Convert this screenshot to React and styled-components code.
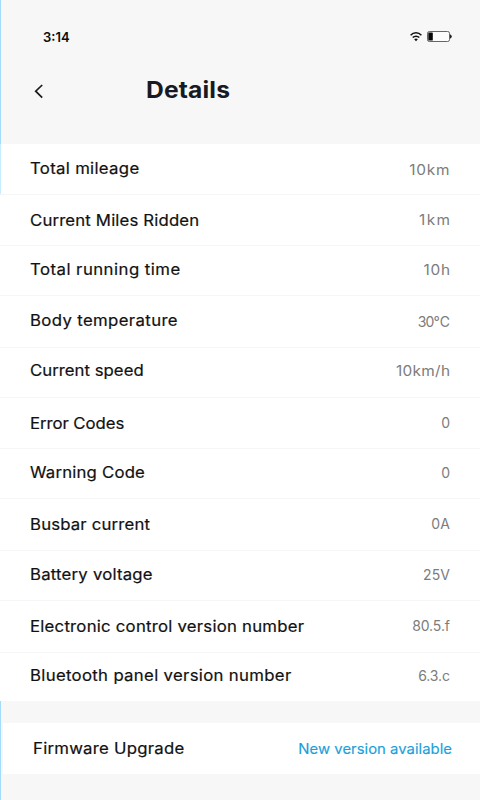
import React from "react";
import styled, { createGlobalStyle } from "styled-components";

const GlobalStyle = createGlobalStyle`
  * { box-sizing: border-box; }
  body { margin: 0; background: #f7f7f7; }
`;

const Screen = styled.main`
  display: flex;
  flex-direction: column;
  width: 480px;
  height: 800px;
  overflow: hidden;
  background: #f7f7f7;
  font-family: Inter, "Noto Sans CJK SC", sans-serif;
`;

const Header = styled.header`
  flex: none;
  height: 144px;
  border-left: 1px solid #a3dcf8;
`;

const StatusBar = styled.div`
  display: flex;
  align-items: center;
  justify-content: space-between;
  height: 73px;
  padding: 0 28px 0 42px;
`;

const Clock = styled.time`
  font-size: 13px;
  font-weight: 600;
  line-height: 16px;
  color: #0c0c0c;
`;

const StatusIcons = styled.div`
  display: flex;
  align-items: center;
  gap: 5px;
`;

const NavBar = styled.div`
  display: flex;
  align-items: center;
  height: 34px;
  padding-left: 32px;
`;

const BackButton = styled.button`
  display: flex;
  width: 12px;
  padding: 2px 0 0;
  border: 0;
  background: none;
`;

const Title = styled.h1`
  margin: 0 0 0 101px;
  font-size: 23px;
  font-weight: 700;
  line-height: 28px;
  letter-spacing: 0.15px;
  color: #171a24;
  transform: scaleX(1.07);
  transform-origin: left;
`;

const List = styled.section`
  flex: none;
  background: #fff;
`;

const Row = styled.div`
  display: flex;
  align-items: flex-start;
  justify-content: space-between;
  height: ${(p) => p.$height}px;
  padding: 0 30px;
  border-bottom: ${(p) => (p.$last ? "0" : "1px solid #f6f6f6")};
  box-shadow: ${(p) => (p.$edge ? "inset 1px 0 #c5eeff" : "none")};
`;

const Label = styled.span`
  padding-top: ${(p) => p.$top}px;
  font-size: 15.5px;
  line-height: 20px;
  letter-spacing: ${(p) => p.$track}px;
  white-space: nowrap;
  color: #111;
  -webkit-text-stroke: 0.2px #111;
  transform: scaleX(1.08);
  transform-origin: left;
`;

const Value = styled.span`
  padding-top: ${(p) => p.$top}px;
  margin-right: ${(p) => -p.$track}px;
  font-size: 14px;
  line-height: 20px;
  letter-spacing: ${(p) => p.$track}px;
  white-space: nowrap;
  color: #7c7c7c;
  transform: scaleX(${(p) => p.$stretch ?? 1});
  transform-origin: right;
`;

const Footer = styled.footer`
  flex: 1;
  padding: 22px 0 0 2px;
  border-left: 1px solid #a3dcf8;
`;

const UpgradeRow = styled.div`
  display: flex;
  align-items: flex-start;
  justify-content: space-between;
  height: 51px;
  padding: 0 28px 0 29.5px;
  background: #fff;
`;

const UpgradeLink = styled(Value)`
  color: #1a9fdb;
  -webkit-text-stroke: 0.15px #1a9fdb;
`;

// label, label spacing, label top, value, value spacing, value top, row height, value stretch
const rows = [
  ["Total mileage", 0.29, 15, "10km", 0.7, 16, 51, 1.1],
  ["Current Miles Ridden", 0.15, 16, "1km", 1.3, 15, 51, 1.1],
  ["Total running time", 0.44, 14, "10h", 0.75, 14, 50, 1.1],
  ["Body temperature", 0.34, 15, "30℃", -0.8, 16, 52, 1],
  ["Current speed", 0.02, 13, "10km/h", 0.25, 13, 50, 1.1],
  ["Error Codes", -0.05, 16, "0", 0, 15, 51, 1],
  ["Warning Code", 0.18, 14, "0", 0, 14, 50, 1],
  ["Busbar current", 0.16, 16, "0A", 0.2, 15, 52, 1],
  ["Battery voltage", 0.2, 14, "25V", 0.1, 14, 50, 1],
  ["Electronic control version number", 0.22, 16, "80.5.f", -0.1, 15, 52, 1],
  ["Bluetooth panel version number", 0.3, 13, "6.3.c", -0.1, 13, 48, 1],
];

function WifiIcon() {
  return (
    <svg width="12" height="10" viewBox="0 0 12 10" fill="none" stroke="#111" strokeWidth="1.5">
      <path d="M0.6 3.2 C3.6 0 8.4 0 11.4 3.2" />
      <path d="M2.7 5.6 C4.5 3.7 7.5 3.7 9.3 5.6" />
      <path d="M4.2 7.3 Q6 5.8 7.8 7.3 L6 9.2Z" fill="#111" stroke="none" />
    </svg>
  );
}

function BatteryIcon() {
  return (
    <svg width="25" height="11" viewBox="0 0 25 11">
      <rect x="0.5" y="0.5" width="22" height="10" rx="1.8" fill="#fcfcfc" stroke="#666" />
      <rect x="1.3" y="1.4" width="4.5" height="8.2" rx="0.6" fill="#080808" />
      <path d="M23 3.3 Q24.8 4 24.8 5.5 Q24.8 7 23 7.7Z" fill="#222" />
    </svg>
  );
}

function BackIcon() {
  return (
    <svg width="12" height="16" viewBox="0 0 12 16" fill="none" stroke="#1b1b1b" strokeWidth="1.7">
      <path d="M9.2 2 L2.7 8.2 L9.2 14.6" />
    </svg>
  );
}

export default function App() {
  return (
    <Screen>
      <GlobalStyle />
      <Header>
        <StatusBar>
          <Clock>3:14</Clock>
          <StatusIcons>
            <WifiIcon />
            <BatteryIcon />
          </StatusIcons>
        </StatusBar>
        <NavBar>
          <BackButton aria-label="Back">
            <BackIcon />
          </BackButton>
          <Title>Details</Title>
        </NavBar>
      </Header>
      <List>
        {rows.map(([label, track, top, value, valueTrack, valueTop, height, stretch], i) => (
          <Row key={label} $height={height} $edge={i === 0} $last={i === rows.length - 1}>
            <Label $track={track} $top={top}>{label}</Label>
            <Value $track={valueTrack} $top={valueTop} $stretch={stretch}>{value}</Value>
          </Row>
        ))}
      </List>
      <Footer>
        <UpgradeRow>
          <Label $track={0.23} $top={16}>Firmware Upgrade</Label>
          <UpgradeLink $track={0.03} $top={16} $stretch={1.06}>New version available</UpgradeLink>
        </UpgradeRow>
      </Footer>
    </Screen>
  );
}
